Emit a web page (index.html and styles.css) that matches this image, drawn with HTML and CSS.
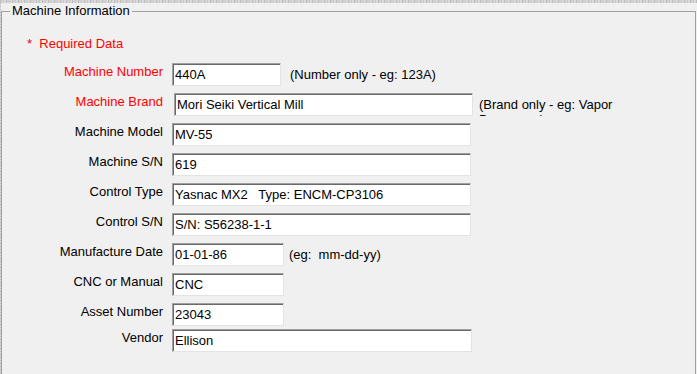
FILE: index.html
```html
<!DOCTYPE html>
<html lang="en">
<head>
  <meta charset="UTF-8">
  <title>Machine Information</title>
  <link rel="stylesheet" href="styles.css">
</head>
<body>

<div class="strip"></div>
<div class="page">
  <div class="edge"></div>
  <fieldset class="group">
    <legend>Machine Information</legend>
    <div class="content">
      <p class="required">*  Required Data</p>

      <div class="rows">
        <div class="row">
          <label class="label req">Machine Number</label>
          <input class="field w-num" type="text" value="440A">
          <span class="hint hint-num">(Number only - eg: 123A)</span>
        </div>
        <div class="row">
          <label class="label req">Machine Brand</label>
          <input class="field w-long shift" type="text" value="Mori Seiki Vertical Mill">
          <span class="hint hint-brand">(Brand only - eg: Vapor Degreaser)</span>
        </div>
        <div class="row">
          <label class="label">Machine Model</label>
          <input class="field w-long" type="text" value="MV-55">
        </div>
        <div class="row">
          <label class="label">Machine S/N</label>
          <input class="field w-long" type="text" value="619">
        </div>
        <div class="row">
          <label class="label">Control Type</label>
          <input class="field w-long" type="text" value="Yasnac MX2   Type: ENCM-CP3106">
        </div>
        <div class="row">
          <label class="label">Control S/N</label>
          <input class="field w-long" type="text" value="S/N: S56238-1-1">
        </div>
        <div class="row">
          <label class="label">Manufacture Date</label>
          <input class="field w-short" type="text" value="01-01-86">
          <span class="hint hint-date">(eg:  mm-dd-yy)</span>
        </div>
        <div class="row">
          <label class="label">CNC or Manual</label>
          <input class="field w-short" type="text" value="CNC">
        </div>
        <div class="row">
          <label class="label">Asset Number</label>
          <input class="field w-short" type="text" value="23043">
        </div>
        <div class="row last">
          <label class="label">Vendor</label>
          <input class="field w-vendor" type="text" value="Ellison">
        </div>
      </div>
    </div>
  </fieldset>
</div>

</body>
</html>
```

FILE: styles.css
```css
html, body {
  margin: 0;
  height: 100%;
  overflow: hidden;
}

body {
  background-color: #f0f0f0;
  font-family: "Liberation Sans", Arial, sans-serif;
  font-size: 13px;
  line-height: 15px;
  color: #000;
}

/* bordo superiore e sinistro "rumoroso" della finestra */
.strip {
  height: 3px;
  background: repeating-linear-gradient(90deg, #bcbcbc 0 1px, #d4d4d4 1px 3px, #c6c6c6 3px 4px, #dadada 4px 6px);
}

.page {
  display: flex;
  height: calc(100% - 3px);
}

.edge {
  width: 1px;
  background: repeating-linear-gradient(180deg, #b8b8b8 0 1px, #d8d8d8 1px 3px);
}

/* Gruppo */
.group {
  width: 695px;
  box-sizing: border-box;
  margin: 0;
  padding: 0;
  border: 1px solid #a0a0a0;
  border-bottom: none;
  min-width: 0;
}

.group legend {
  margin-left: 8px;
  padding: 0 2px;
  line-height: 16px;
}

.required {
  margin: 17px 0 0 25px;
  color: #ff0000;
  white-space: pre;
}

.rows {
  display: flex;
  flex-direction: column;
  gap: 7px;
  margin-top: 12px;
}

.row {
  display: flex;
  align-items: flex-start;
  height: 23px;
}

.row.last {
  margin-top: -4px;
}

.label {
  width: 161px;
  padding-top: 1px;
  text-align: right;
  flex: none;
}

.label.req {
  color: #ff0000;
}

.field {
  box-sizing: border-box;
  height: 23px;
  margin: 0 0 0 9px;
  padding: 0 2px;
  border: 1px solid;
  border-color: #a0a0a0 #e3e3e3 #e3e3e3 #a0a0a0;
  box-shadow: inset 1px 1px 0 #696969;
  background: #fff;
  font-family: "Liberation Sans", Arial, sans-serif;
  font-size: 13px;
  color: #000;
  outline: none;
  white-space: pre;
}

.field.shift {
  margin-left: 11px;
}

.w-num { width: 109px; }
.w-long { width: 299px; }
.w-short { width: 112px; }
.w-vendor { width: 300px; }

.hint {
  padding-top: 4px;
  white-space: pre;
}

.hint-num {
  margin-left: 9px;
}

/* testo a capo tagliato come nell'originale */
.hint-brand {
  margin-left: 6px;
  width: 180px;
  height: 23px;
  box-sizing: border-box;
  overflow: hidden;
  white-space: normal;
}

.hint-date {
  margin-left: 5px;
}
```
